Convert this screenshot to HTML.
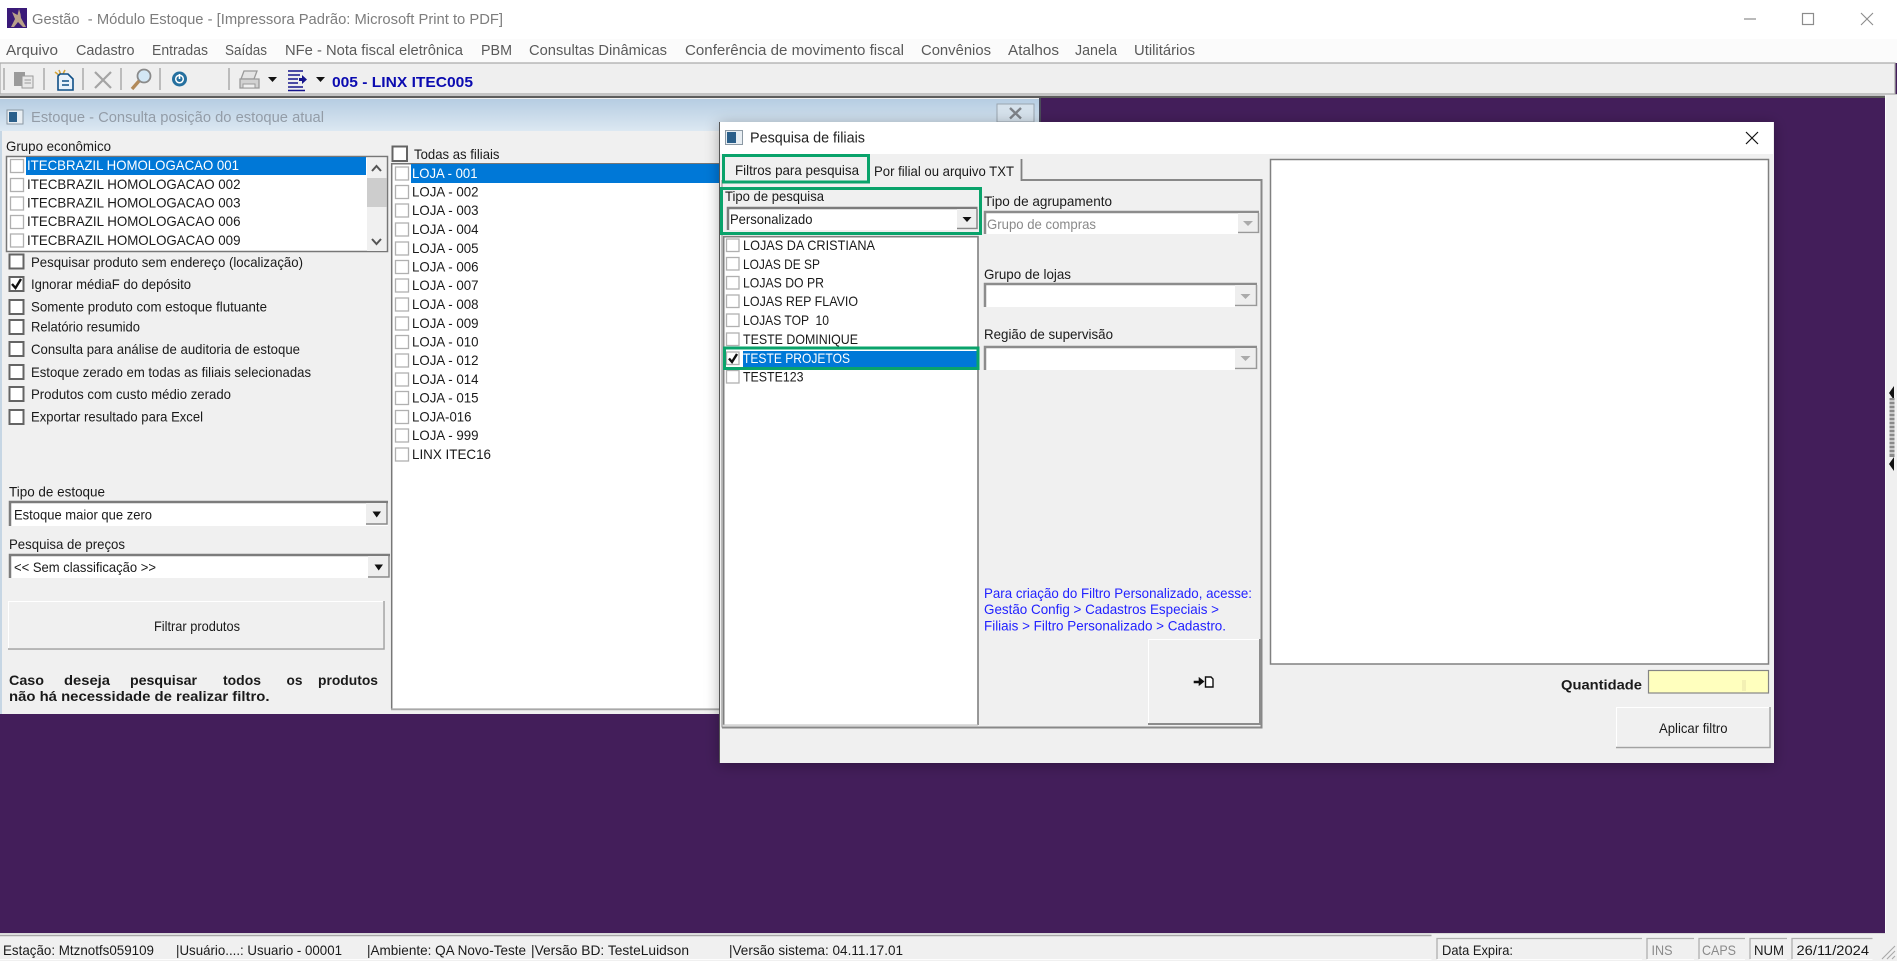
<!DOCTYPE html>
<html><head><meta charset="utf-8"><title>Gestão - Módulo Estoque</title>
<style>
html,body{margin:0;padding:0;width:1897px;height:961px;overflow:hidden;background:#431e5a}
svg{display:block;position:absolute;left:0;top:0;filter:blur(.35px)}
text{font-family:"Liberation Sans",sans-serif;font-size:14px;fill:#1a1a1a;white-space:pre}
.m{fill:#5a5a5a;font-size:14.5px}
.tt{fill:#7d7d7d;font-size:15px}
.wt{fill:#939ca7;font-size:15px}
.b{font-weight:bold}
.w{fill:#fff}
.g{fill:#8a8a8a}
.bl{fill:#2222ff}
.cs{fill:#fff;stroke:#b0b0b0;stroke-width:1.3}
.cb{fill:#fff;stroke:#646464;stroke-width:2}
.gr{fill:none;stroke:#0aa36b;stroke-width:3}
</style></head><body>
<svg width="1897" height="961" viewBox="0 0 1897 961" xmlns="http://www.w3.org/2000/svg">
<defs>
<linearGradient id="tg" x1="0" y1="0" x2="0" y2="1"><stop offset="0" stop-color="#b6cde2"/><stop offset="1" stop-color="#dce8f2"/></linearGradient>
<filter id="sh" x="-5%" y="-5%" width="110%" height="110%"><feDropShadow dx="0" dy="2" stdDeviation="7" flood-color="#000" flood-opacity=".3"/></filter>
</defs>
<rect width="1897" height="961" fill="#431e5a"/>

<!-- App title -->
<rect width="1897" height="39" fill="#fff"/>
<rect y="39" width="1897" height="24" fill="#fbfbfb"/>
<rect x="7" y="8" width="20" height="20" fill="#3a1a78"/>
<path d="M19 9L17.500 15L12 12L15 19L11 27H14L18 22L23 27H26L21 18L20.500 14Z" fill="#b8a08a"/>
<text x="32" y="24" class="tt" textLength="471" lengthAdjust="spacingAndGlyphs">Gestão  - Módulo Estoque - [Impressora Padrão: Microsoft Print to PDF]</text>
<path d="M1744 19H1756" stroke="#8c8c8c" stroke-width="1.2"/>
<rect x="1802.5" y="13.5" width="11" height="11" fill="none" stroke="#8c8c8c" stroke-width="1.2"/>
<path d="M1861 13L1873 25M1873 13L1861 25" stroke="#8c8c8c" stroke-width="1.1"/>

<!-- Menu -->
<g class="menu">
<text x="6" y="55" class="m" textLength="52" lengthAdjust="spacingAndGlyphs">Arquivo</text>
<text x="76" y="55" class="m" textLength="58.5" lengthAdjust="spacingAndGlyphs">Cadastro</text>
<text x="152" y="55" class="m" textLength="56" lengthAdjust="spacingAndGlyphs">Entradas</text>
<text x="225" y="55" class="m" textLength="42" lengthAdjust="spacingAndGlyphs">Saídas</text>
<text x="285" y="55" class="m" textLength="178" lengthAdjust="spacingAndGlyphs">NFe - Nota fiscal eletrônica</text>
<text x="481" y="55" class="m" textLength="31" lengthAdjust="spacingAndGlyphs">PBM</text>
<text x="529" y="55" class="m" textLength="138" lengthAdjust="spacingAndGlyphs">Consultas Dinâmicas</text>
<text x="685" y="55" class="m" textLength="219" lengthAdjust="spacingAndGlyphs">Conferência de movimento fiscal</text>
<text x="921" y="55" class="m" textLength="70" lengthAdjust="spacingAndGlyphs">Convênios</text>
<text x="1008" y="55" class="m" textLength="51" lengthAdjust="spacingAndGlyphs">Atalhos</text>
<text x="1075" y="55" class="m" textLength="42" lengthAdjust="spacingAndGlyphs">Janela</text>
<text x="1134" y="55" class="m" textLength="61" lengthAdjust="spacingAndGlyphs">Utilitários</text>
</g>

<!-- Toolbar -->
<rect x="0" y="63" width="1895" height="31" fill="#efefef" stroke="#a8a8a8" stroke-width="1.2"/>
<rect x="0" y="94" width="1897" height="2" fill="#c4c4c4"/>
<rect x="0" y="96" width="1885" height="2" fill="#5c5c5c"/>
<path d="M4 68V90M44 68V90M83 68V90M121 68V90M160 68V90M229 68V90" stroke="#ababab" stroke-width="1.5"/>
<rect x="14" y="72" width="11" height="14" fill="#9a9a9a"/><rect x="22" y="76" width="11" height="12" fill="#e8e8e8" stroke="#9a9a9a"/>
<path d="M24.5 80H31M24.5 83H31" stroke="#9a9a9a"/>
<path d="M55 72L60 76M59 70L61 75M65 70L62 76" stroke="#d6a53a" stroke-width="1.6"/>
<path d="M60 74H68L73 79V90H58V76Z" fill="#e9f2fb" stroke="#0f4f86" stroke-width="1.6"/><path d="M62 81H69M62 85H69" stroke="#0f4f86" stroke-width="1.4"/>
<path d="M95 72L111 88M111 72L95 88" stroke="#a4a4a4" stroke-width="2.2"/>
<circle cx="144" cy="76" r="6.500" fill="#d3e7f5" stroke="#8a8a8a" stroke-width="1.800"/><path d="M139 81L132 89" stroke="#b28a5a" stroke-width="3.400"/>
<circle cx="179.500" cy="79" r="7.500" fill="#25709f"/><circle cx="179.500" cy="79" r="3.800" fill="none" stroke="#fff" stroke-width="1.500"/><path d="M179.500 74V79" stroke="#fff" stroke-width="1.600"/>
<path d="M244 71H257L254 79H241Z" fill="#e4e4e4" stroke="#9a9a9a" stroke-width="1.300"/><path d="M240 79H259V88H240Z" fill="#d2d2d2" stroke="#9a9a9a" stroke-width="1.300"/><path d="M243 84H255V88H243Z" fill="#f0f0f0" stroke="#9a9a9a"/>
<path d="M268 77H277L272.500 82Z" fill="#111"/>
<path d="M288 71H303M288 75H300M288 79H298M288 83H298M288 87H303" stroke="#15158c" stroke-width="1.500"/><path d="M288 90.500H305" stroke="#15158c" stroke-width="1.500"/><path d="M299 78H302V75L307 79.500L302 84V81H299Z" fill="#15158c"/>
<path d="M316 77H325L320.500 82Z" fill="#111"/>
<text x="332" y="87" class="b" style="fill:#0a0ab0;font-size:15px" textLength="141" lengthAdjust="spacingAndGlyphs">005 - LINX ITEC005</text>

<!-- Estoque MDI window -->
<rect x="0" y="98" width="1041" height="616" fill="#f0f0f0"/>
<rect x="0" y="99" width="1041" height="32" fill="url(#tg)"/>
<rect x="0" y="131" width="2" height="583" fill="#c6d6e4"/>
<rect x="1039" y="98" width="2" height="34" fill="#4b4b5a"/>
<rect x="7" y="110" width="16" height="14" fill="#e8eef3" stroke="#8b98a3"/><rect x="9" y="112" width="8" height="10" fill="#2b5f8a"/>
<text x="31" y="122" class="wt" textLength="293" lengthAdjust="spacingAndGlyphs">Estoque - Consulta posição do estoque atual</text>
<rect x="997" y="104" width="37" height="18" fill="#d6e2ec" stroke="#9aa5af"/>
<path d="M1010 108L1021 118.500M1021 108L1010 118.500" stroke="#7d8288" stroke-width="2.400"/>

<text x="6" y="151" textLength="105" lengthAdjust="spacingAndGlyphs">Grupo econômico</text>
<!-- Group list -->
<rect x="6.500" y="156.500" width="381" height="95" fill="#fff" stroke="#777" stroke-width="1.500"/>
<rect x="26" y="157" width="340" height="18" fill="#0078d7"/>
<rect x="367" y="158" width="19.500" height="93" fill="#f0f0f0"/>
<rect x="367" y="178" width="19.500" height="29" fill="#cdcdcd"/>
<path d="M372 171L376.500 166L381 171" fill="none" stroke="#555" stroke-width="2"/>
<path d="M372 239L376.500 244L381 239" fill="none" stroke="#555" stroke-width="2"/>
<rect x="10.500" y="159.500" width="13" height="13" class="cs"/><rect x="10.500" y="178.500" width="13" height="13" class="cs"/><rect x="10.500" y="197" width="13" height="13" class="cs"/><rect x="10.500" y="215.500" width="13" height="13" class="cs"/><rect x="10.500" y="234" width="13" height="13" class="cs"/>
<text x="27" y="170" class="w" textLength="212" lengthAdjust="spacingAndGlyphs">ITECBRAZIL HOMOLOGACAO 001</text>
<text x="27" y="189" textLength="213.500" lengthAdjust="spacingAndGlyphs">ITECBRAZIL HOMOLOGACAO 002</text>
<text x="27" y="207.500" textLength="213.500" lengthAdjust="spacingAndGlyphs">ITECBRAZIL HOMOLOGACAO 003</text>
<text x="27" y="226" textLength="213.500" lengthAdjust="spacingAndGlyphs">ITECBRAZIL HOMOLOGACAO 006</text>
<text x="27" y="245" textLength="213.500" lengthAdjust="spacingAndGlyphs">ITECBRAZIL HOMOLOGACAO 009</text>

<!-- Options -->
<rect x="9.500" y="254.500" width="14" height="14" class="cb"/>
<rect x="9.500" y="277" width="14" height="14" class="cb"/>
<rect x="9.500" y="300" width="14" height="14" class="cb"/>
<rect x="9.500" y="320" width="14" height="14" class="cb"/>
<rect x="9.500" y="342" width="14" height="14" class="cb"/>
<rect x="9.500" y="365" width="14" height="14" class="cb"/>
<rect x="9.500" y="387" width="14" height="14" class="cb"/>
<rect x="9.500" y="410" width="14" height="14" class="cb"/>
<path d="M12 284L15.500 288L21 279" fill="none" stroke="#111" stroke-width="2.400"/>
<text x="31" y="267" textLength="272" lengthAdjust="spacingAndGlyphs">Pesquisar produto sem endereço (localização)</text>
<text x="31" y="289" textLength="160" lengthAdjust="spacingAndGlyphs">Ignorar médiaF do depósito</text>
<text x="31" y="311.500" textLength="236" lengthAdjust="spacingAndGlyphs">Somente produto com estoque flutuante</text>
<text x="31" y="331.500" textLength="109" lengthAdjust="spacingAndGlyphs">Relatório resumido</text>
<text x="31" y="354" textLength="269" lengthAdjust="spacingAndGlyphs">Consulta para análise de auditoria de estoque</text>
<text x="31" y="377" textLength="280" lengthAdjust="spacingAndGlyphs">Estoque zerado em todas as filiais selecionadas</text>
<text x="31" y="399" textLength="200" lengthAdjust="spacingAndGlyphs">Produtos com custo médio zerado</text>
<text x="31" y="421.500" textLength="172" lengthAdjust="spacingAndGlyphs">Exportar resultado para Excel</text>

<text x="9" y="496.500" textLength="96" lengthAdjust="spacingAndGlyphs">Tipo de estoque</text>
<rect x="9" y="501" width="379" height="25" fill="#fff"/>
<path d="M10 526V502H388" fill="none" stroke="#7c7c7c" stroke-width="2.500"/>
<rect x="366" y="503" width="20.500" height="21" fill="#eee"/><path d="M366 524H387V503" fill="none" stroke="#888" stroke-width="1.500"/>
<path d="M372.500 511.500H381L376.700 517.500Z" fill="#111"/>
<text x="14" y="519.500" textLength="138" lengthAdjust="spacingAndGlyphs">Estoque maior que zero</text>

<text x="9" y="549" textLength="116" lengthAdjust="spacingAndGlyphs">Pesquisa de preços</text>
<rect x="9" y="554" width="381" height="24" fill="#fff"/>
<path d="M10 578V555H390" fill="none" stroke="#7c7c7c" stroke-width="2.500"/>
<rect x="368" y="556" width="21" height="21" fill="#eee"/><path d="M368 577H389V556" fill="none" stroke="#888" stroke-width="1.500"/>
<path d="M374.500 564.500H383L378.700 570.500Z" fill="#111"/>
<text x="14" y="572" textLength="142" lengthAdjust="spacingAndGlyphs">&lt;&lt; Sem classificação &gt;&gt;</text>

<rect x="8.500" y="601.500" width="375" height="47" fill="#f0f0f0" stroke="#fff"/>
<path d="M384 601V649H8" fill="none" stroke="#a2a2a2" stroke-width="1.500"/>
<text x="154" y="631" textLength="86" lengthAdjust="spacingAndGlyphs">Filtrar produtos</text>

<g class="b">
<text x="9" y="685" class="b" textLength="35" lengthAdjust="spacingAndGlyphs">Caso</text>
<text x="64" y="685" class="b" textLength="46" lengthAdjust="spacingAndGlyphs">deseja</text>
<text x="130" y="685" class="b" textLength="67" lengthAdjust="spacingAndGlyphs">pesquisar</text>
<text x="223" y="685" class="b" textLength="38" lengthAdjust="spacingAndGlyphs">todos</text>
<text x="286.500" y="685" class="b" textLength="16" lengthAdjust="spacingAndGlyphs">os</text>
<text x="318" y="685" class="b" textLength="60" lengthAdjust="spacingAndGlyphs">produtos</text>
<text x="9" y="701" class="b" textLength="260.500" lengthAdjust="spacingAndGlyphs">não há necessidade de realizar filtro.</text>
</g>

<!-- Filiais list -->
<rect x="392.500" y="146.500" width="14.500" height="14.500" class="cb"/>
<text x="414" y="159" textLength="85.500" lengthAdjust="spacingAndGlyphs">Todas as filiais</text>
<rect x="391" y="163" width="650" height="546.500" fill="#fff"/>
<path d="M391.700 709V163.700H1041" fill="none" stroke="#777" stroke-width="1.500"/>
<path d="M391 709.300H1041" stroke="#a8a8a8" stroke-width="1.800"/>
<rect x="411" y="164" width="630" height="19" fill="#0078d7"/>
<g>
<rect x="395.500" y="167" width="13" height="13" class="cs"/><rect x="395.500" y="185.500" width="13" height="13" class="cs"/><rect x="395.500" y="204" width="13" height="13" class="cs"/><rect x="395.500" y="223" width="13" height="13" class="cs"/><rect x="395.500" y="242" width="13" height="13" class="cs"/><rect x="395.500" y="260.500" width="13" height="13" class="cs"/><rect x="395.500" y="279" width="13" height="13" class="cs"/><rect x="395.500" y="298" width="13" height="13" class="cs"/><rect x="395.500" y="317" width="13" height="13" class="cs"/><rect x="395.500" y="335.500" width="13" height="13" class="cs"/><rect x="395.500" y="354" width="13" height="13" class="cs"/><rect x="395.500" y="373" width="13" height="13" class="cs"/><rect x="395.500" y="391.500" width="13" height="13" class="cs"/><rect x="395.500" y="410.500" width="13" height="13" class="cs"/><rect x="395.500" y="429" width="13" height="13" class="cs"/><rect x="395.500" y="448" width="13" height="13" class="cs"/>
</g>
<text x="412" y="178" class="w" textLength="65.500" lengthAdjust="spacingAndGlyphs">LOJA - 001</text>
<text x="412" y="196.500" textLength="66.500" lengthAdjust="spacingAndGlyphs">LOJA - 002</text>
<text x="412" y="215" textLength="66.500" lengthAdjust="spacingAndGlyphs">LOJA - 003</text>
<text x="412" y="234" textLength="66.500" lengthAdjust="spacingAndGlyphs">LOJA - 004</text>
<text x="412" y="253" textLength="66.500" lengthAdjust="spacingAndGlyphs">LOJA - 005</text>
<text x="412" y="271.500" textLength="66.500" lengthAdjust="spacingAndGlyphs">LOJA - 006</text>
<text x="412" y="290" textLength="66.500" lengthAdjust="spacingAndGlyphs">LOJA - 007</text>
<text x="412" y="309" textLength="66.500" lengthAdjust="spacingAndGlyphs">LOJA - 008</text>
<text x="412" y="328" textLength="66.500" lengthAdjust="spacingAndGlyphs">LOJA - 009</text>
<text x="412" y="346.500" textLength="66.500" lengthAdjust="spacingAndGlyphs">LOJA - 010</text>
<text x="412" y="365" textLength="66.500" lengthAdjust="spacingAndGlyphs">LOJA - 012</text>
<text x="412" y="384" textLength="66.500" lengthAdjust="spacingAndGlyphs">LOJA - 014</text>
<text x="412" y="402.500" textLength="66.500" lengthAdjust="spacingAndGlyphs">LOJA - 015</text>
<text x="412" y="421.500" textLength="59.500" lengthAdjust="spacingAndGlyphs">LOJA-016</text>
<text x="412" y="440" textLength="66.500" lengthAdjust="spacingAndGlyphs">LOJA - 999</text>
<text x="412" y="459" textLength="79" lengthAdjust="spacingAndGlyphs">LINX ITEC16</text>

<!-- Dialog -->
<rect x="719" y="122" width="1055" height="641" fill="#f0f0f0" filter="url(#sh)"/>
<rect x="719" y="122" width="1054" height="32" fill="#fff"/>
<path d="M719.500 122V763" stroke="#555" stroke-width="1"/>
<rect x="725.500" y="130.500" width="17" height="14" fill="#e8eef3" stroke="#8b98a3"/><rect x="727" y="132" width="9" height="11" fill="#2b5f8a"/>
<text x="750" y="142.500" style="font-size:15px;fill:#222" textLength="115" lengthAdjust="spacingAndGlyphs">Pesquisa de filiais</text>
<path d="M1746 132L1758 144M1758 132L1746 144" stroke="#111" stroke-width="1.200"/>

<!-- Tabs -->
<path d="M726 181V159H1021V180" fill="#f0f0f0"/>
<path d="M1021.500 159V181" stroke="#808080" stroke-width="1.800"/>
<text x="735" y="175" textLength="124" lengthAdjust="spacingAndGlyphs">Filtros para pesquisa</text>
<text x="874" y="176" textLength="140" lengthAdjust="spacingAndGlyphs">Por filial ou arquivo TXT</text>
<path d="M1022 180H1261.500V727.500H722" fill="none" stroke="#888" stroke-width="2"/>
<path d="M722 727.500V180" stroke="#999" stroke-width="1.200"/>

<rect x="723.500" y="155.500" width="145" height="26.500" class="gr"/>

<text x="725" y="201" textLength="99" lengthAdjust="spacingAndGlyphs">Tipo de pesquisa</text>
<rect x="727" y="207" width="250.500" height="23" fill="#fff"/>
<path d="M728 230V208H977.500" fill="none" stroke="#7c7c7c" stroke-width="2.500"/>
<rect x="957" y="209" width="19.500" height="20" fill="#eee"/><path d="M957 228.500H977V209" fill="none" stroke="#888" stroke-width="1.500"/>
<path d="M962.500 217H971.500L967 222Z" fill="#111"/>
<text x="730" y="224" textLength="82.500" lengthAdjust="spacingAndGlyphs">Personalizado</text>
<rect x="721.500" y="188.500" width="259" height="45" class="gr"/>

<!-- Personalizado list -->
<rect x="723" y="236" width="255.500" height="489" fill="#fff"/>
<path d="M723.700 725V236.700H978V725" fill="none" stroke="#808080" stroke-width="1.600"/>
<path d="M723 725H978" stroke="#bdbdbd" stroke-width="1"/>
<rect x="743" y="351" width="234" height="16" fill="#0078d7"/>
<rect x="726.500" y="239" width="12.500" height="12.500" class="cs"/><rect x="726.500" y="257.500" width="12.500" height="12.500" class="cs"/><rect x="726.500" y="276.500" width="12.500" height="12.500" class="cs"/><rect x="726.500" y="295" width="12.500" height="12.500" class="cs"/><rect x="726.500" y="314" width="12.500" height="12.500" class="cs"/><rect x="726.500" y="333" width="12.500" height="12.500" class="cs"/><rect x="726.500" y="352" width="12.500" height="12.500" class="cs"/><rect x="726.500" y="370.500" width="12.500" height="12.500" class="cs"/>
<path d="M729 358.500L732 362L737 354" fill="none" stroke="#111" stroke-width="2.400"/>
<text x="743" y="250" textLength="132" lengthAdjust="spacingAndGlyphs">LOJAS DA CRISTIANA</text>
<text x="743" y="269" textLength="77" lengthAdjust="spacingAndGlyphs">LOJAS DE SP</text>
<text x="743" y="287.500" textLength="81" lengthAdjust="spacingAndGlyphs">LOJAS DO PR</text>
<text x="743" y="306" textLength="115" lengthAdjust="spacingAndGlyphs">LOJAS REP FLAVIO</text>
<text x="743" y="325" textLength="86" lengthAdjust="spacingAndGlyphs">LOJAS TOP  10</text>
<text x="743" y="344" textLength="115" lengthAdjust="spacingAndGlyphs">TESTE DOMINIQUE</text>
<text x="743" y="363" class="w" textLength="107" lengthAdjust="spacingAndGlyphs">TESTE PROJETOS</text>
<text x="743" y="381.500" textLength="60.500" lengthAdjust="spacingAndGlyphs">TESTE123</text>
<rect x="724.500" y="348" width="253.500" height="20.500" class="gr"/>

<!-- Right combos -->
<text x="984" y="206" textLength="128" lengthAdjust="spacingAndGlyphs">Tipo de agrupamento</text>
<rect x="984" y="211" width="275" height="23" fill="#fff"/>
<path d="M985 234V212H1259" fill="none" stroke="#8c8c8c" stroke-width="2.500"/>
<rect x="1238" y="213" width="20" height="20" fill="#eee"/><path d="M1238 232.500H1258.500V213" fill="none" stroke="#999" stroke-width="1.500"/>
<path d="M1243 221H1253L1248 226Z" fill="#aaa"/>
<text x="987" y="229" class="g" textLength="109" lengthAdjust="spacingAndGlyphs">Grupo de compras</text>

<text x="984" y="279" textLength="87" lengthAdjust="spacingAndGlyphs">Grupo de lojas</text>
<rect x="984" y="283" width="273" height="24" fill="#fff"/>
<path d="M985 307V284H1257" fill="none" stroke="#8c8c8c" stroke-width="2.500"/>
<rect x="1235" y="285" width="21" height="21" fill="#eee"/><path d="M1235 305.500H1256.500V285" fill="none" stroke="#999" stroke-width="1.500"/>
<path d="M1240.500 294H1250.500L1245.500 299Z" fill="#aaa"/>

<text x="984" y="339" textLength="129" lengthAdjust="spacingAndGlyphs">Região de supervisão</text>
<rect x="984" y="346" width="273" height="24" fill="#fff"/>
<path d="M985 370V347H1257" fill="none" stroke="#8c8c8c" stroke-width="2.500"/>
<rect x="1235" y="348" width="21" height="21" fill="#eee"/><path d="M1235 368.500H1256.500V348" fill="none" stroke="#999" stroke-width="1.500"/>
<path d="M1240.500 356H1250.500L1245.500 361Z" fill="#aaa"/>

<text x="984" y="598" class="bl" textLength="268" lengthAdjust="spacingAndGlyphs">Para criação do Filtro Personalizado, acesse:</text>
<text x="984" y="614" class="bl" textLength="235" lengthAdjust="spacingAndGlyphs">Gestão Config &gt; Cadastros Especiais &gt;</text>
<text x="984" y="630.500" class="bl" textLength="242" lengthAdjust="spacingAndGlyphs">Filiais &gt; Filtro Personalizado &gt; Cadastro.</text>

<rect x="1148.500" y="639.500" width="111" height="84" fill="#f0f0f0" stroke="#fff"/>
<path d="M1260 639V724H1148" fill="none" stroke="#8c8c8c" stroke-width="2"/>
<path d="M1194 681H1199V677.500L1204 681.500L1199 685.500V683H1194Z" fill="#111" stroke="#111" stroke-width=".6"/>
<path d="M1205.500 677H1211L1213 679V687H1205.500Z" fill="#fff" stroke="#111" stroke-width="1.400"/>

<!-- Right list -->
<rect x="1270.500" y="159.500" width="498" height="504.500" fill="#fff" stroke="#808080" stroke-width="1.500"/>

<text x="1561" y="689.500" class="b" textLength="81" lengthAdjust="spacingAndGlyphs">Quantidade</text>
<rect x="1648.500" y="670.500" width="120" height="22.500" fill="#ffffbe" stroke="#858585" stroke-width="1.200"/>
<rect x="1742" y="680" width="4" height="11" fill="#f3f0b4"/>

<rect x="1616.500" y="707.500" width="153" height="39.500" fill="#f0f0f0" stroke="#fff"/>
<path d="M1770 707V747.500H1616" fill="none" stroke="#a2a2a2" stroke-width="1.500"/>
<text x="1659" y="733" textLength="68.500" lengthAdjust="spacingAndGlyphs">Aplicar filtro</text>

<!-- Right strip -->
<rect x="1885" y="95" width="12" height="838" fill="#f0f0f0"/>
<path d="M1885.500 95V933" stroke="#fbfbfb"/>
<path d="M1894 386V400L1889 393Z" fill="#111"/>
<rect x="1889.500" y="398" width="5" height="59" fill="#8a8a8a"/>
<path d="M1889.500 401H1894.500M1889.500 405H1894.500M1889.500 409H1894.500M1889.500 413H1894.500M1889.500 417H1894.500M1889.500 421H1894.500M1889.500 425H1894.500M1889.500 429H1894.500M1889.500 433H1894.500M1889.500 437H1894.500M1889.500 441H1894.500M1889.500 445H1894.500M1889.500 449H1894.500M1889.500 453H1894.500" stroke="#eee" stroke-width="1.300"/>
<path d="M1894 457V471L1889 464Z" fill="#111"/>

<!-- Status bar -->
<rect x="0" y="933" width="1897" height="28" fill="#f0f0f0"/>
<rect x="0" y="933" width="1885" height="1" fill="#d8d8d8"/>
<path d="M0 935.500H1431.500" stroke="#a6a6a6" stroke-width="1.500"/>
<path d="M1437 959V938.500H1642M1647 959V938.500H1694M1699 959V938.500H1745M1750 959V938.500H1787M1792 959V938.500H1872.500" fill="none" stroke="#b0b0b0" stroke-width="1.300"/>
<path d="M1437 959.500H1642M1647 959.500H1694M1699 959.500H1745M1750 959.500H1787M1792 959.500H1872.500M0 959.500H1431.500" stroke="#fdfdfd"/>
<text x="3" y="955" textLength="151" lengthAdjust="spacingAndGlyphs">Estação: Mtznotfs059109</text>
<text x="176" y="955" textLength="166" lengthAdjust="spacingAndGlyphs">|Usuário....: Usuario - 00001</text>
<text x="367" y="955" textLength="159" lengthAdjust="spacingAndGlyphs">|Ambiente: QA Novo-Teste</text>
<text x="531" y="955" textLength="158" lengthAdjust="spacingAndGlyphs">|Versão BD: TesteLuidson</text>
<text x="729" y="955" textLength="174" lengthAdjust="spacingAndGlyphs">|Versão sistema: 04.11.17.01</text>
<text x="1442" y="955" textLength="71" lengthAdjust="spacingAndGlyphs">Data Expira:</text>
<text x="1651.500" y="955" class="g" textLength="21" lengthAdjust="spacingAndGlyphs">INS</text>
<text x="1702" y="955" class="g" textLength="34" lengthAdjust="spacingAndGlyphs">CAPS</text>
<text x="1754" y="955" textLength="30" lengthAdjust="spacingAndGlyphs">NUM</text>
<text x="1796.500" y="955" textLength="72.500" lengthAdjust="spacingAndGlyphs">26/11/2024</text>
<path d="M1882 959L1895 946M1887 959L1895 951M1892 959L1895 956" stroke="#a8a8a8" stroke-width="1.100"/>
</svg>
</body></html>
